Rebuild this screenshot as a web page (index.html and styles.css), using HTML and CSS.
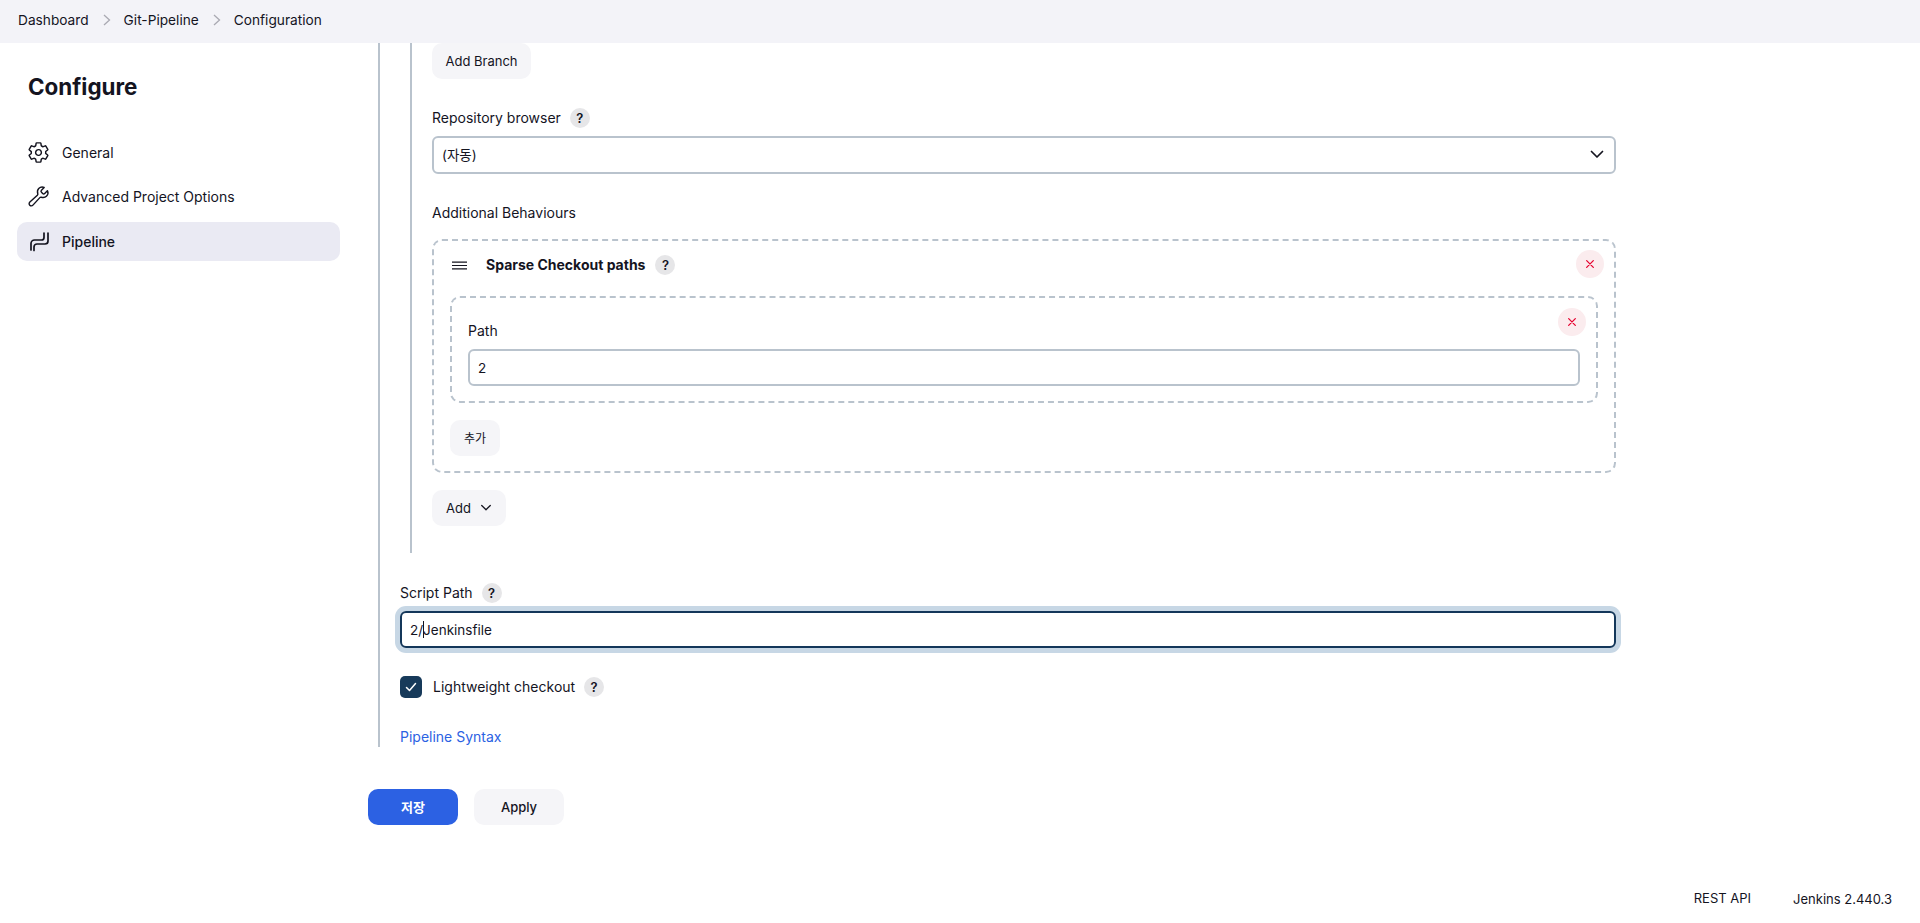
FILE: index.html
```html
<!DOCTYPE html>
<html lang="en">
<head>
<meta charset="utf-8">
<title>Git-Pipeline Config [Jenkins]</title>
<link rel="stylesheet" href="styles.css">
</head>
<body>
<header class="breadcrumbs">
  <a class="crumb">Dashboard</a>
  <svg class="crumb-sep" viewBox="0 0 10 14"><path d="M2 2l5.500 5L2 12"/></svg>
  <a class="crumb">Git-Pipeline</a>
  <svg class="crumb-sep" viewBox="0 0 10 14"><path d="M2 2l5.500 5L2 12"/></svg>
  <a class="crumb">Configuration</a>
</header>
<div class="layout">
  <aside class="sidebar">
    <h1 class="sidebar-title">Configure</h1>
    <nav class="side-nav">
      <a class="side-item">
        <svg class="side-icon" viewBox="0 0 512 512"><path d="M262.29 192.31a64 64 0 1057.4 57.4 64.13 64.13 0 00-57.4-57.4zM416.39 256a154.34 154.34 0 01-1.53 20.79l45.21 35.46a10.81 10.81 0 012.45 13.75l-42.77 74a10.81 10.81 0 01-13.14 4.59l-44.9-18.08a16.11 16.11 0 00-15.17 1.75A164.48 164.48 0 01325 400.8a15.94 15.94 0 00-8.82 12.14l-6.73 47.89a11.08 11.08 0 01-10.68 9.17h-85.54a11.11 11.11 0 01-10.69-8.87l-6.72-47.82a16.07 16.07 0 00-9-12.22 155.3 155.3 0 01-21.46-12.57 16 16 0 00-15.11-1.71l-44.89 18.07a10.81 10.81 0 01-13.14-4.58l-42.77-74a10.8 10.8 0 012.45-13.75l38.21-30a16.05 16.05 0 006-14.08c-.36-4.17-.58-8.33-.58-12.5s.21-8.27.58-12.35a16 16 0 00-6.07-13.94l-38.19-30A10.81 10.81 0 0149.48 186l42.77-74a10.81 10.81 0 0113.14-4.59l44.9 18.08a16.11 16.11 0 0015.17-1.75A164.48 164.48 0 01187 111.2a15.94 15.94 0 008.82-12.14l6.73-47.89A11.08 11.08 0 01213.23 42h85.54a11.11 11.11 0 0110.69 8.87l6.72 47.82a16.07 16.07 0 009 12.22 155.3 155.3 0 0121.46 12.57 16 16 0 0015.11 1.71l44.89-18.07a10.81 10.81 0 0113.14 4.58l42.77 74a10.8 10.8 0 01-2.45 13.75l-38.21 30a16.05 16.05 0 00-6.05 14.08c.33 4.14.55 8.3.55 12.47z"/></svg>
        <span>General</span>
      </a>
      <a class="side-item">
        <svg class="side-icon" viewBox="0 0 512 512"><path d="M393.87 190a32.1 32.1 0 01-45.25 0l-26.57-26.57a32.09 32.09 0 010-45.25L382.19 58a1 1 0 00-.3-1.64c-38.82-16.64-89.15-8.16-121.11 23.57-30.58 30.35-32.32 76-21.12 115.84a31.93 31.93 0 01-9.06 32.08L64 380a48.17 48.17 0 1068 68l153.86-167a31.93 31.93 0 0131.6-9.13c39.54 10.59 84.54 8.6 114.72-21.19 32.49-32 39.5-88.56 23.75-120.93a1 1 0 00-1.6-.26z"/></svg>
        <span>Advanced Project Options</span>
      </a>
      <a class="side-item active">
        <svg class="side-icon" viewBox="0 0 23 23"><path d="M17 3v4.500a2.500 2.500 0 01-2.500 2.500H7.500a3.500 3.500 0 00-3.500 3.500v6.500"/><path d="M21 3v8a3 3 0 01-3 3h-8a3 3 0 00-3 3v3.500"/></svg>
        <span>Pipeline</span>
      </a>
    </nav>
  </aside>
  <main class="content">
    <section class="outer-section">
      <div class="inner-section">
        <button class="btn branch-btn">Add Branch</button>
        <div class="field repo-field">
          <div class="label-row"><label>Repository browser</label><span class="help">?</span></div>
          <div class="select-box">
            <span>(자동)</span>
            <svg class="chev" viewBox="0 0 14 9"><path d="M1.500 1.500L7 7l5.500-5.500"/></svg>
          </div>
        </div>
        <div class="behaviours-label">Additional Behaviours</div>
        <div class="repeat-card">
          <span class="close-btn"><svg viewBox="0 0 12 12"><path d="M2 2l8 8M10 2l-8 8"/></svg></span>
          <div class="card-head">
            <svg class="handle" viewBox="0 0 16 9"><path d="M0 1h16M0 4.500h16M0 8h16"/></svg>
            <strong>Sparse Checkout paths</strong>
            <span class="help">?</span>
          </div>
          <div class="repeat-card nested">
            <span class="close-btn"><svg viewBox="0 0 12 12"><path d="M2 2l8 8M10 2l-8 8"/></svg></span>
            <label class="path-label">Path</label>
            <div class="text-input">2</div>
          </div>
          <button class="btn add-path">추가</button>
        </div>
        <button class="btn add-btn">Add <svg class="chev small" viewBox="0 0 14 9"><path d="M2 1.500L7 6.500l5-5"/></svg></button>
      </div>
      <div class="label-row script-label"><label>Script Path</label><span class="help">?</span></div>
      <div class="text-input focused"><span>2/</span><i class="caret"></i><span>Jenkinsfile</span></div>
      <div class="check-row">
        <span class="checkbox"><svg viewBox="0 0 14 14"><path d="M2.500 7.500l3 3 6-7"/></svg></span>
        <label>Lightweight checkout</label>
        <span class="help">?</span>
      </div>
      <a class="syntax-link">Pipeline Syntax</a>
    </section>
    <div class="form-actions">
      <button class="btn primary">저장</button>
      <button class="btn apply">Apply</button>
    </div>
  </main>
</div>
<footer class="page-footer">
  <a class="rest-link">REST API</a>
  <span>Jenkins 2.440.3</span>
</footer>
</body>
</html>
```
FILE: styles.css
```css
* { box-sizing: border-box; }
html, body { margin: 0; height: 923px; overflow: hidden; }
body {
  display: flex;
  flex-direction: column;
  background: #fff;
  color: #14141f;
  font-family: Inter, "Noto Sans CJK KR", "Liberation Sans", sans-serif;
  font-size: 14px;
  font-weight: 400;
  line-height: 20px;
}
label, strong, a, span { display: inline-block; }

.breadcrumbs {
  display: flex;
  align-items: center;
  height: 43px;
  padding: 0 0 3px 18px;
  background: #f3f3f8;
  font-size: 13.700px;
}
.crumb-sep { width: 10px; height: 14px; margin: 0 12px 0 13px; fill: none; stroke: #a9a9b2; stroke-width: 1.300; }

.layout { display: flex; flex: 1; min-height: 0; }

.sidebar { width: 368px; padding: 0 28px 0 17px; flex: none; }
.sidebar-title { margin: 29px 0 0 11px; font-size: 22.400px; line-height: 30px; font-weight: 700; }
.side-nav { display: flex; flex-direction: column; margin-top: 31px; }
.side-item { display: flex; align-items: center; gap: 12px; height: 39px; margin-top: 5px; padding-left: 10px; border-radius: 10px; color: #14141f; }
.side-item.active { margin-top: 6px; background: #eaeaf3; font-weight: 500; }
.side-item:first-child { margin-top: 0; }
.side-icon { width: 23px; height: 23px; flex: none; fill: none; stroke: #14141f; stroke-width: 32; stroke-linecap: round; stroke-linejoin: round; }
.side-item.active .side-icon { stroke-width: 1.700; }

.content { flex: 1; min-width: 0; }

.outer-section {
  width: 1248px;
  margin-left: 10px;
  padding-left: 20px;
  border-left: 2px solid #b9c3cd;
  height: 704px;
}
.inner-section {
  width: 1206px;
  margin-left: 10px;
  padding-left: 20px;
  border-left: 2px solid #b9c3cd;
  height: 510px;
  display: flex;
  flex-direction: column;
  align-items: flex-start;
}

.btn {
  display: inline-flex;
  align-items: center;
  justify-content: center;
  height: 36px;
  padding: 0 14px;
  border: 0;
  border-radius: 10px;
  background: #f5f5f8;
  color: #14141f;
  font: inherit;
  font-size: 13px;
}
.branch-btn { width: 99px; padding: 0; }

.field { width: 100%; }
.repo-field { margin-top: 29px; }
.label-row { display: flex; align-items: center; gap: 9px; height: 20px; }
.help {
  display: flex;
  align-items: center;
  justify-content: center;
  width: 20px;
  height: 20px;
  border-radius: 50%;
  background: #e6e6e8;
  color: #14141f;
  font-size: 13px;
  font-weight: 600;
}
.select-box {
  display: flex;
  align-items: center;
  justify-content: space-between;
  height: 38px;
  margin-top: 8px;
  padding: 0 10px 1px 8px;
  border: 2px solid #b9c3cd;
  border-radius: 6px;
  font-size: 13.500px;
}
.chev { width: 14px; height: 9px; fill: none; stroke: #14141f; stroke-width: 1.700; stroke-linecap: round; stroke-linejoin: round; }
.chev.small { width: 12px; height: 8px; margin-left: 9px; stroke-width: 1.500; }

.behaviours-label { margin-top: 29px; }

.repeat-card {
  position: relative;
  width: 100%;
  height: 234px;
  margin-top: 16px;
  padding: 0 16px;
  border: 2px dashed #b9c3cd;
  border-radius: 10px;
}
.close-btn {
  position: absolute;
  top: 9px;
  right: 10px;
  display: flex;
  align-items: center;
  justify-content: center;
  width: 28px;
  height: 28px;
  border-radius: 50%;
  background: #fbecee;
}
.close-btn svg { width: 10px; height: 10px; fill: none; stroke: #e6002e; stroke-width: 1.500; stroke-linecap: round; }
.card-head { display: flex; align-items: center; height: 20px; margin: 14px 0 0 2px; }
.handle { width: 15px; height: 9px; margin-right: 19px; fill: none; stroke: #14141f; stroke-width: 1.300; }
.card-head strong { font-weight: 700; margin-right: 10px; }

.repeat-card.nested {
  width: 1148px;
  height: 107px;
  margin-top: 21px;
  padding: 23px 16px 0;
}
.nested .close-btn { top: 10px; right: 10px; }
.path-label { display: block; }
.text-input {
  display: flex;
  align-items: center;
  height: 37px;
  padding: 0 8px;
  border: 2px solid #b9c3cd;
  border-radius: 6px;
  font-size: 13.500px;
}
.nested .text-input { width: 1112px; margin-top: 8px; }
.add-path { margin-top: 17px; width: 50px; padding: 0; font-family: "Noto Sans CJK KR", sans-serif; font-size: 12px; }
.add-btn { margin-top: 17px; }

.script-label { margin-top: 30px; }
.text-input.focused {
  width: 1216px;
  margin-top: 8px;
  border-color: #14375a;
  box-shadow: 0 0 0 5px #c7d7e5;
}
.caret { width: 1px; height: 17px; background: #14141f; margin-right: -1px; }

.check-row { display: flex; align-items: center; height: 22px; margin-top: 28px; }
.checkbox { display: flex; align-items: center; justify-content: center; width: 22px; height: 22px; margin-right: 11px; border-radius: 5px; background: #173a5a; }
.checkbox svg { width: 14px; height: 14px; fill: none; stroke: #fff; stroke-width: 1.500; stroke-linecap: round; stroke-linejoin: round; }
.check-row .help { margin-left: 9px; }

.syntax-link { display: block; margin-top: 29px; color: #2b62e3; }

.form-actions { display: flex; gap: 16px; margin-top: 42px; }
.form-actions .btn { width: 90px; padding: 0; }
.btn.primary { background: #2c61e3; color: #fff; font-weight: 700; font-family: "Noto Sans CJK KR", sans-serif; font-size: 13px; }
.btn.apply { font-weight: 500; }

.page-footer {
  display: flex;
  justify-content: flex-end;
  align-items: center;
  gap: 42px;
  height: 50px;
  padding: 2px 28px 0 0;
  font-size: 13px;
}
.rest-link { margin-top: -2px; }
```
